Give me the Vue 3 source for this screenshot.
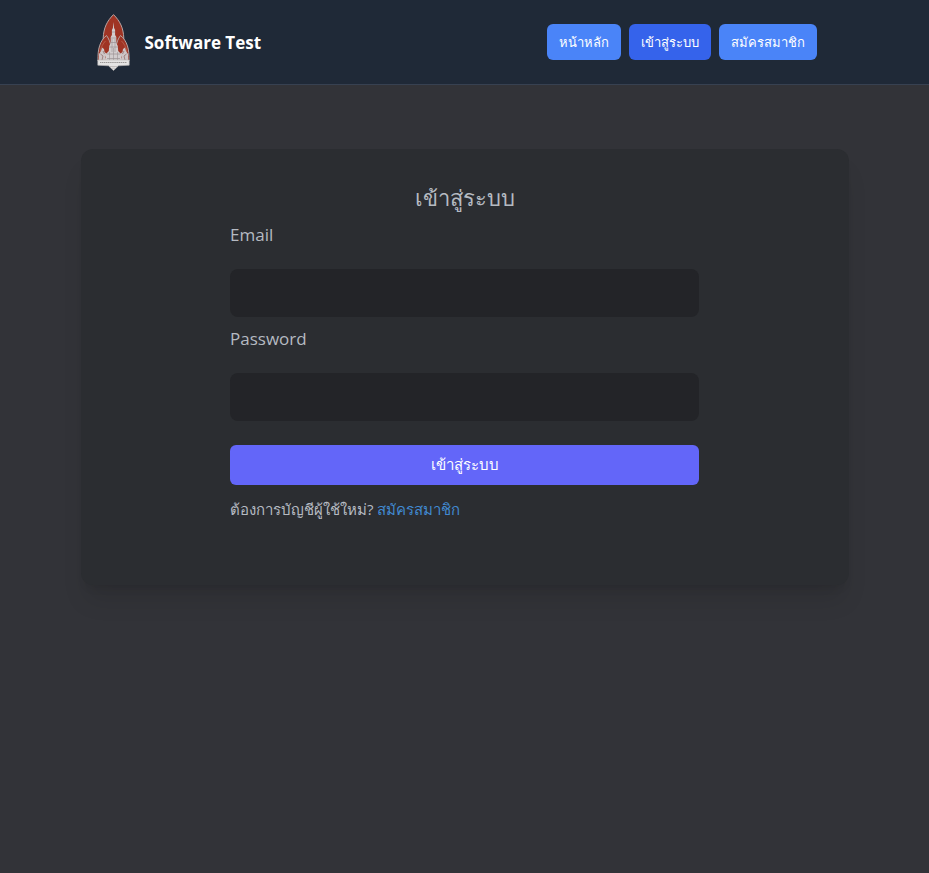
<script setup>
</script>
<template>
  <div class="page">
    <header class="bar">
      <div class="inner">
        <a href="#" class="brand">
          <svg class="logo" viewBox="0 -2 34 60" aria-hidden="true">
            <!-- three red petals with pale outlines -->
            <g fill="#9f3424" stroke="#b5a5a4" stroke-width="1">
              <path d="M16.5 .6 C10 7 6.6 14 6.2 24 L6.2 46 L26.8 46 L26.8 24 C26.4 14 23 7 16.5 .6Z"/>
              <path d="M9.5 21.5 C2.8 27 .6 35 1 47 L13 47 C15 37 14.5 28 9.5 21.5Z"/>
              <path d="M23.5 21.5 C30.2 27 32.4 35 32 47 L20 47 C18 37 18.5 28 23.5 21.5Z"/>
            </g>
            <path d="M3 38 C4 33 6 29.5 8.5 27 M30 38 C29 33 27 29.5 24.5 27" fill="none" stroke="#bd6b58" stroke-width=".7"/>
            <!-- tiered spire -->
            <path d="M16.5 8 L17.1 14 L18.1 16 L18.1 21 L19.3 23 L19.3 29 L20.8 32 L21.2 37 L24 40 L24 50 L9 50 L9 40 L11.8 37 L12.2 32 L13.7 29 L13.7 23 L14.9 21 L14.9 16 L15.9 14Z" fill="#d2cdce"/>
            <path d="M15 18 H18 M14 24 H19 M13.5 28.5 H19.5 M12.2 33 H20.8 M10 40 H23 M10 44.5 H23" stroke="#a1989a" stroke-width=".8"/>
            <path d="M15 25 V38 M18 25 V38 M16.5 34 V49 M12.5 38 V49 M20.5 38 V49" stroke="#9b9294" stroke-width=".6"/>
            <!-- flanking figures -->
            <g fill="#cdc5c6">
              <path d="M2 49 L2 40 L4 37 L5 33.5 L7 35 L7.5 38 L10 40 L8.5 43 L10 49Z"/>
              <path d="M31 49 L31 40 L29 37 L28 33.5 L26 35 L25.5 38 L23 40 L24.5 43 L23 49Z"/>
            </g>
            <path d="M3.5 40 L6 42 L5 46 M6 37 L7.5 40 M29.5 40 L27 42 L28 46 M27 37 L25.5 40" fill="none" stroke="#92716e" stroke-width=".8"/>
            <!-- inscribed base -->
            <path d="M.8 46 H32.2 V51.2 L21.5 51.8 L16.5 56.5 L11.5 51.8 L.8 51.2Z" fill="#e5e4e3" stroke="#b9b5b4" stroke-width=".6"/>
            <path d="M3 48.5 H30" stroke="#9b9896" stroke-width="1" stroke-dasharray="1.4 .5"/>
            <path d="M13 52.5 H20 M15 54.2 H18" stroke="#a9a4a3" stroke-width=".6"/>
          </svg>
          <span>Software Test</span>
        </a>
        <nav class="nav">
          <button type="button">หน้าหลัก</button>
          <button type="button" class="active">เข้าสู่ระบบ</button>
          <button type="button">สมัครสมาชิก</button>
        </nav>
      </div>
    </header>
    <main class="main">
      <section class="card">
        <form class="form" @submit.prevent>
          <h1>เข้าสู่ระบบ</h1>
          <label for="email">Email</label>
          <input id="email" type="email">
          <label for="password">Password</label>
          <input id="password" type="password">
          <button type="submit">เข้าสู่ระบบ</button>
          <p>ต้องการบัญชีผู้ใช้ใหม่? <a href="#">สมัครสมาชิก</a></p>
        </form>
      </section>
    </main>
  </div>
</template>
<style>
body { background: #323338; }
</style>
<style scoped>
* { box-sizing: border-box; }
.page { min-height: 100vh; background: #323338; color: #b5bac1; font-family: "Open Sans", "Noto Sans", sans-serif; }
.bar { background: #1f2937; border-bottom: 1px solid #374151; }
.inner { max-width: 768px; margin: 0 auto; padding: 12px 32px 12px 16px; display: flex; justify-content: space-between; align-items: center; }
.brand { display: flex; gap: 14px; align-items: center; color: #fff; font-size: 17px; font-weight: 700; text-decoration: none; }
.logo { width: 34px; height: 60px; }
.nav { display: flex; gap: 8px; }
button { border: 0; border-radius: 6px; color: #fff; font-family: inherit; font-weight: 500; cursor: pointer; }
.nav button { height: 36px; padding: 0 12px; font-size: 13px; background: #4a84f8; }
.nav .active { background: #3563eb; }
.main { padding: 64px 80px; }
.card { max-width: 768px; margin: 0 auto; background: #2b2d31; border-radius: 12px; padding: 32px 16px 64px; box-shadow: 0 20px 25px -5px rgba(0, 0, 0, .1), 0 8px 10px -6px rgba(0, 0, 0, .1); }
.form { width: 469px; max-width: 100%; margin: 0 auto; display: flex; flex-direction: column; }
h1 { margin: 0 0 8px; font-size: 22px; line-height: 32px; font-weight: 400; text-align: center; }
label { font-size: 17px; line-height: 28px; margin-bottom: 20px; }
input { height: 48px; border: 0; border-radius: 8px; padding: 0 16px; color: inherit; font: inherit; background: #232428; margin-bottom: 8px; }
.form button { height: 40px; background: #6366f9; font-size: 15px; margin-top: 16px; }
p { margin: 12px 0 0; font-size: 15px; line-height: 24px; }
p a { color: #4189d0; text-decoration: none; }
</style>
